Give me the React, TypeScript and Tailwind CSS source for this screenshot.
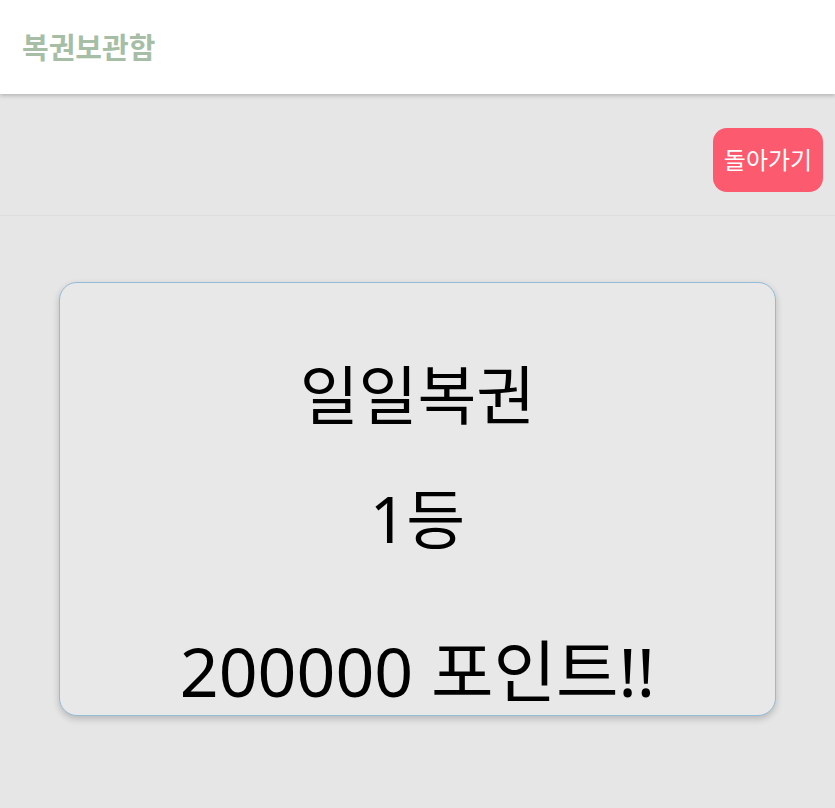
export default function App() {
  return (
    <div
      className="min-h-[808px] bg-[#e6e6e6]"
      style={{ fontFamily: '"Noto Sans", "Noto Sans CJK KR", sans-serif' }}
    >
      <header className="flex h-[94px] items-center bg-white px-[22px] shadow-[0_2px_4px_rgba(0,0,0,0.2)]">
        <h1 className="text-[29px] font-bold leading-none text-[#a5bea5]">복권보관함</h1>
      </header>

      <div className="flex h-[121px] items-start justify-end pr-[12px] pt-[34px]">
        <button className="h-[64px] w-[110px] rounded-[14px] bg-[#fc5a6f] text-[24px] text-white">
          돌아가기
        </button>
      </div>

      <div className="border-t border-[#dedede] px-[59px] pt-[66px]">
        <div className="flex h-[434px] flex-col items-center rounded-[18px] border-[1.5px] border-[#94bcd6] bg-[#e8e8e8] shadow-[0_3px_7px_rgba(0,0,0,0.2)]">
          <p className="mt-[80px] text-[64px] leading-none text-black">일일복권</p>
          <p className="mt-[60px] text-[64px] leading-none text-black">1등</p>
          <p className="mt-[86px] text-[68px] leading-none text-black">200000 포인트!!</p>
        </div>
      </div>
    </div>
  );
}
